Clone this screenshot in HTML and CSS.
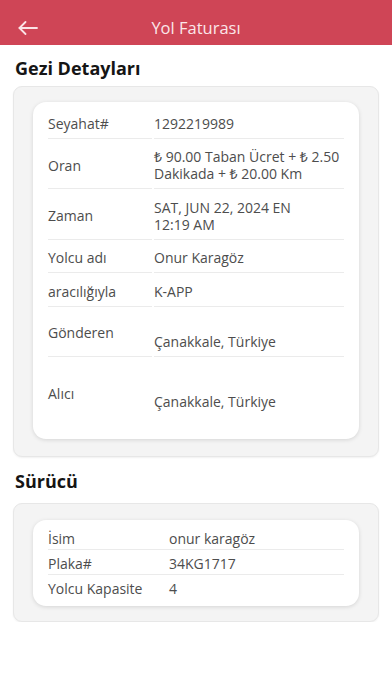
FILE: index.html
```html
<!DOCTYPE html>
<html lang="tr">
<head>
<meta charset="utf-8">
<meta name="viewport" content="width=device-width, initial-scale=1">
<title>Yol Faturası</title>
<link rel="stylesheet" href="styles.css">
</head>
<body>
<header class="topbar">
  <button class="back" aria-label="Geri">
    <svg width="20" height="14" viewBox="0 0 20 14" fill="none" stroke="currentColor" stroke-width="1.8" stroke-linecap="round" stroke-linejoin="round">
      <path d="M19 7H1.5"/>
      <path d="M7.5 1L1.5 7l6 6"/>
    </svg>
  </button>
  <h1 class="topbar-title">Yol Faturası</h1>
</header>

<h2 class="section-title first">Gezi Detayları</h2>
<section class="panel">
  <div class="card trip">
    <div class="trow"><div class="tl">Seyahat#</div><div class="tv">1292219989</div></div>
    <div class="trow"><div class="tl">Oran</div><div class="tv">₺ 90.00 Taban Ücret + ₺ 2.50 Dakikada + ₺ 20.00 Km</div></div>
    <div class="trow"><div class="tl">Zaman</div><div class="tv">SAT, JUN 22, 2024 EN 12:19&nbsp;AM</div></div>
    <div class="trow"><div class="tl">Yolcu adı</div><div class="tv">Onur Karagöz</div></div>
    <div class="trow"><div class="tl">aracılığıyla</div><div class="tv">K-APP</div></div>
    <div class="trow"><div class="tl">Gönderen</div><div class="tv addr">Çanakkale, Türkiye</div></div>
    <div class="trow last"><div class="tl">Alıcı</div><div class="tv addr dest">Çanakkale, Türkiye</div></div>
  </div>
</section>

<h2 class="section-title second">Sürücü</h2>
<section class="panel driver-panel">
  <div class="card driver">
    <div class="drow"><span class="dl">İsim</span><span class="dv">onur karagöz</span></div>
    <div class="drow"><span class="dl">Plaka#</span><span class="dv">34KG1717</span></div>
    <div class="drow last"><span class="dl">Yolcu Kapasite</span><span class="dv">4</span></div>
  </div>
</section>
</body>
</html>
```

FILE: styles.css
```css
* { box-sizing: border-box; }

html, body {
  margin: 0;
  padding: 0;
  background: #ffffff;
  font-family: "Open Sans", "Noto Sans", "Liberation Sans", sans-serif;
  color: #4d4d4d;
}

.topbar {
  height: 45px;
  background: #cf4556;
  display: flex;
  align-items: center;
  justify-content: center;
  padding-top: 11px;
  position: relative;
}

.back {
  position: absolute;
  left: 18px;
  top: 21px;
  width: 22px;
  height: 14px;
  padding: 0;
  border: 0;
  background: transparent;
  color: #fbe3e6;
  display: flex;
  align-items: center;
}

.topbar-title {
  margin: 0;
  font-size: 16.5px;
  font-weight: 400;
  line-height: 22px;
  color: #fbe6e9;
}

.section-title {
  margin: 0 15px;
  font-size: 18px;
  font-weight: 700;
  color: #151515;
  line-height: 22px;
}
.section-title.first { margin-top: 12px; margin-bottom: 7px; }
.section-title.second { margin-top: 13px; margin-bottom: 11px; }

.panel {
  margin: 0 13px;
  background: #f4f4f4;
  border: 1px solid #e7e7e7;
  border-radius: 9px;
  padding: 15px 19px 17px;
  box-shadow: 0 1px 2px rgba(0, 0, 0, 0.06);
}
.driver-panel { padding: 16px 19px 15px; }

.card {
  background: #ffffff;
  border-radius: 13px;
  box-shadow: 0 1px 4px rgba(0, 0, 0, 0.13);
  padding: 3px 15px 12px;
  font-size: 14px;
  line-height: 17px;
}

.trow {
  display: grid;
  grid-template-columns: 104px 1fr;
  column-gap: 2px;
}
.tl, .tv {
  padding: 9.5px 0 6px;
  border-bottom: 1px solid #ebebeb;
}
.tl {
  display: flex;
  align-items: center;
}
.trow.last .tl, .trow.last .tv { border-bottom: 0; }
.tv.addr { padding-top: 26px; }
.tv.dest { padding-top: 36px; padding-bottom: 17px; }

.card.driver { padding: 5px 15px 7px; }
.drow {
  display: grid;
  grid-template-columns: 121px 1fr;
  padding: 5px 0 2px;
  border-bottom: 1px solid #ebebeb;
}
.drow.last { border-bottom: 0; }
```
